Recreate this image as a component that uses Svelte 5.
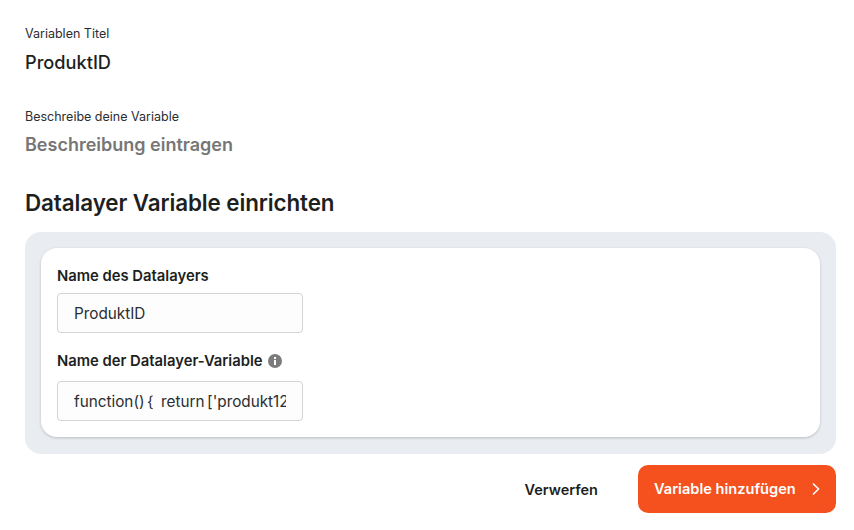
<script>
  let title = "ProduktID";
  let fields = [
    { label: "Name des Datalayers", value: "ProduktID", info: false },
    { label: "Name der Datalayer-Variable", value: "function() {   return ['produkt123']; }", info: true },
  ];
</script>

<main>
  <section class="meta">
    <p class="small">Variablen Titel</p>
    <p class="big">{title}</p>
  </section>
  <section class="meta second">
    <p class="small">Beschreibe deine Variable</p>
    <p class="big muted">Beschreibung eintragen</p>
  </section>

  <h2>Datalayer Variable einrichten</h2>

  <div class="panel">
    <div class="card">
      {#each fields as field}
        <div class="field">
          <div class="label">
            {field.label}
            {#if field.info}
              <svg class="info" viewBox="0 0 14 14" width="14" height="14" aria-hidden="true">
                <circle cx="7" cy="7" r="7" fill="#7c7c7c" />
                <rect x="6" y="6" width="2" height="5" fill="#fff" />
                <rect x="6" y="3" width="2" height="2" fill="#fff" />
              </svg>
            {/if}
          </div>
          <div class="input"><span>{field.value}</span></div>
        </div>
      {/each}
    </div>
  </div>

  <div class="actions">
    <button class="ghost">Verwerfen</button>
    <button class="primary">
      Variable hinzufügen
      <svg viewBox="0 0 10 14" width="10" height="14" aria-hidden="true">
        <path d="M2 1.5l5.5 5.5L2 12.5" fill="none" stroke="#fff" stroke-width="1.6" />
      </svg>
    </button>
  </div>
</main>

<style>
  :global(body) {
    margin: 0;
    background: #fff;
  }
  main {
    font-family: Inter, "Liberation Sans", sans-serif;
    color: #1d1f21;
    box-sizing: border-box;
    width: 854px;
    height: 530px;
    padding: 26px 18px 0 25px;
    overflow: hidden;
  }
  p {
    margin: 0;
  }
  .small {
    font-size: 12.5px;
    line-height: 15px;
    color: #2b2d30;
  }
  .big {
    font-size: 18.2px;
    font-weight: 500;
    line-height: 24px;
    margin-top: 9px;
  }
  .muted {
    color: #767676;
    font-size: 18px;
    font-weight: 600;
  }
  .second {
    margin-top: 35px;
  }
  h2 {
    margin: 32px 0 0;
    font-size: 22.4px;
    font-weight: 600;
    line-height: 28px;
    letter-spacing: -0.1px;
  }
  .panel {
    margin-top: 15px;
    background: #e9edf2;
    border-radius: 16px;
    padding: 16px;
    height: 222px;
    box-sizing: border-box;
  }
  .card {
    background: #fff;
    border-radius: 16px;
    padding: 17px 16px 16px;
    height: 189px;
    box-sizing: border-box;
    box-shadow: 0 1px 3px rgba(0, 0, 0, 0.2);
  }
  .field + .field {
    margin-top: 17px;
  }
  .field + .field .input {
    margin-top: 9px;
  }
  .label {
    display: flex;
    align-items: center;
    gap: 5px;
    font-size: 14.8px;
    font-weight: 600;
    line-height: 22px;
  }
  .input {
    box-sizing: border-box;
    width: 246px;
    height: 40px;
    margin-top: 6px;
    padding: 0 16px;
    display: flex;
    align-items: center;
    background: #fdfdfd;
    border: 1px solid #d4d4d4;
    border-radius: 4px;
    font-size: 15.3px;
    word-spacing: -1.8px;
    color: #2b2d30;
  }
  .input span {
    overflow: hidden;
    white-space: pre;
  }
  .actions {
    display: flex;
    justify-content: flex-end;
    align-items: center;
    gap: 40px;
    margin-top: 11px;
  }
  button {
    font: inherit;
    border: 0;
    cursor: pointer;
  }
  .ghost {
    background: none;
    padding: 0;
    font-size: 14.5px;
    font-weight: 600;
    color: #1d1f21;
  }
  .primary {
    display: flex;
    align-items: center;
    justify-content: space-between;
    box-sizing: border-box;
    width: 198px;
    height: 48px;
    padding: 0 15px 0 16px;
    background: #f4511e;
    color: #fff;
    border-radius: 10px;
    font-size: 14.6px;
    font-weight: 600;
  }
</style>
